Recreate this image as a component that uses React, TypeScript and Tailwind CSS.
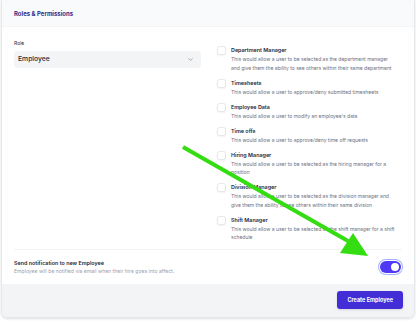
import { ChevronDown } from "lucide-react";

const permissions = [
  { title: "Department Manager", lines: ["This would allow a user to be selected as the department manager", "and give them the ability to see others within their same department"] },
  { title: "Timesheets", lines: ["This would allow a user to approve/deny submitted timesheets"] },
  { title: "Employee Data", lines: ["This would allow a user to modify an employee's data"] },
  { title: "Time offs", lines: ["This would allow a user to approve/deny time off requests"] },
  { title: "Hiring Manager", lines: ["This would allow a user to be selected as the hiring manager for a", "position"] },
  { title: "Division Manager", lines: ["This would allow a user to be selected as the division manager and", "give them the ability to see others within their same division"] },
  { title: "Shift Manager", lines: ["This would allow a user to be selected as the shift manager for a shift", "schedule"] },
];

function Permission({ title, lines }: { title: string; lines: string[] }) {
  return (
    <label className="flex gap-[5px] items-start">
      <span className="w-[9px] h-[9px] shrink-0 rounded-[2.5px] border border-gray-200 bg-white shadow-xs" />
      <span className="flex flex-col">
        <span className="text-[5.4px] leading-[9px] font-semibold text-gray-800">{title}</span>
        {lines.map((l) => (
          <span key={l} className="text-[5px] leading-[8.5px] text-gray-500 whitespace-nowrap">{l}</span>
        ))}
      </span>
    </label>
  );
}

export default function App() {
  return (
    <div className="relative w-[416px] h-[321px] bg-white overflow-hidden" style={{ fontFamily: "Inter, 'Noto Sans', sans-serif" }}>
      <div className="mx-[1px] rounded-b-[6px] border-x border-b border-gray-200 shadow-sm overflow-hidden">
        <div className="h-[27px] bg-[#f9fafb] border-b border-gray-100 px-[12px] flex items-center">
          <h2 className="text-[6px] font-bold text-indigo-900">Roles &amp; Permissions</h2>
        </div>

        <div className="bg-white px-[12px]">
          <div className="grid grid-cols-[187px_1fr] gap-[16px] pt-[12px]">
            <div className="flex flex-col gap-[4px]">
              <span className="text-[5px] leading-[8px] text-gray-800">Role</span>
              <div className="h-[17px] rounded-[4px] bg-gray-100 px-[4px] flex items-center justify-between">
                <span className="text-[6.8px] font-medium text-gray-800">Employee</span>
                <ChevronDown size={7} className="text-gray-500 mr-[3px]" />
              </div>
            </div>
            <div className="flex flex-col gap-[6.5px] pt-[7px]">
              {permissions.map((p) => (
                <Permission key={p.title} {...p} />
              ))}
            </div>
          </div>

          <div className="mt-[7px] border-t border-gray-100 flex items-center justify-between py-[9px] pr-[1px]">
            <div className="flex flex-col">
              <span className="text-[5.4px] leading-[8px] font-semibold text-gray-800">Send notification to new Employee</span>
              <span className="text-[5.1px] leading-[8px] text-gray-400">Employee will be notified via email when their hire goes into affect.</span>
            </div>
            <div className="w-[21px] h-[12px] rounded-full bg-indigo-600 ring-1 ring-indigo-300 ring-offset-1 flex items-center justify-end px-[2px]">
              <span className="w-[8px] h-[8px] rounded-full bg-white" />
            </div>
          </div>
        </div>

        <div className="bg-gray-100 h-[33px] flex items-center justify-end px-[11px]">
          <button className="h-[18px] px-[10px] rounded-[3px] bg-indigo-700 text-white text-[5.5px] font-bold shadow-sm">
            Create Employee
          </button>
        </div>
      </div>

      <svg className="absolute inset-0 pointer-events-none" width="416" height="321" viewBox="0 0 416 321">
        <line x1="183" y1="147" x2="348" y2="241" stroke="#33dd11" strokeWidth="4" />
        <polygon points="340,253 353,233 368,256" fill="#33dd11" />
      </svg>
    </div>
  );
}
